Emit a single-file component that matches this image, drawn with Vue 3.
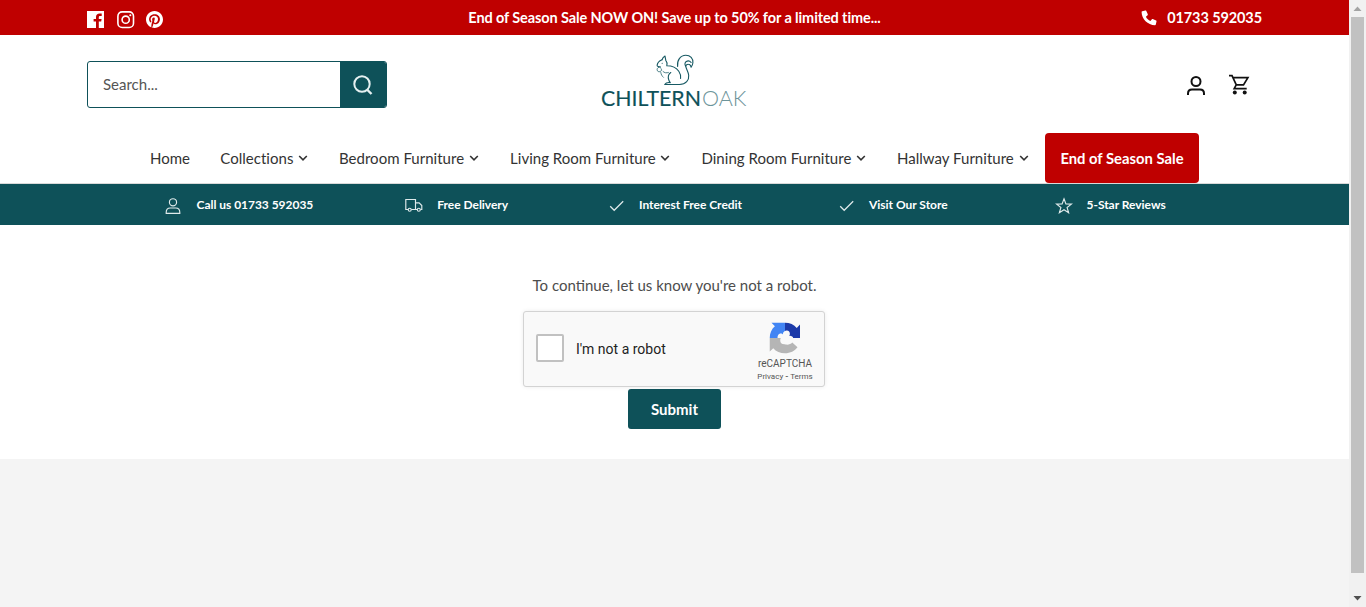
<script setup>
const links = [
  { label: 'Home', menu: false, width: 40.3 },
  { label: 'Collections', menu: true, width: 87.700 },
  { label: 'Bedroom Furniture', menu: true, width: 140.100 },
  { label: 'Living Room Furniture', menu: true, width: 160.400 },
  { label: 'Dining Room Furniture', menu: true, width: 164.500 },
  { label: 'Hallway Furniture', menu: true, width: 132 },
]
const benefits = [
  { icon: 'person', label: 'Call us 01733 592035' },
  { icon: 'truck', label: 'Free Delivery' },
  { icon: 'check', label: 'Interest Free Credit' },
  { icon: 'check', label: 'Visit Our Store' },
  { icon: 'star', label: '5-Star Reviews' },
]
</script>

<template>
  <div class="window">
    <div class="page">
      <div class="announce">
        <div class="social">
          <svg width="18" height="18" viewBox="0 0 18 18"><path fill="#fff" fill-rule="evenodd" d="M0 0h17v17h-5.200v-6.400h2.400l.4-2.700h-2.800V6.300c0-.8.4-1.300 1.400-1.300h1.500V2.500c-.5-.1-1.200-.1-2-.1-2.300 0-3.700 1.300-3.700 3.700v1.800H6.600v2.700H9V17H0z" /></svg>
          <svg width="18" height="18" viewBox="0 0 18 18" fill="none" stroke="#fff" stroke-width="1.600"><rect x=".9" y=".9" width="15.600" height="15.600" rx="4.300" /><circle cx="8.700" cy="8.700" r="3.600" /><circle cx="13.300" cy="4.200" r="1.050" fill="#fff" stroke="none" /></svg>
          <svg class="pin" width="17" height="17" viewBox="0 0 24 24"><path fill="#fff" d="M12 0C5.370 0 0 5.370 0 12c0 5.080 3.160 9.420 7.630 11.170-.1-.95-.2-2.400.04-3.440.22-.94 1.410-5.960 1.410-5.960s-.36-.72-.36-1.780c0-1.670.97-2.910 2.170-2.910 1.020 0 1.520.77 1.520 1.690 0 1.030-.66 2.570-1 3.990-.28 1.190.6 2.160 1.780 2.160 2.130 0 3.770-2.250 3.770-5.500 0-2.870-2.060-4.880-5.010-4.880-3.410 0-5.410 2.560-5.410 5.200 0 1.030.4 2.140.89 2.740.1.120.11.220.08.340l-.33 1.360c-.05.220-.17.270-.4.160-1.500-.7-2.430-2.890-2.430-4.650 0-3.780 2.750-7.260 7.920-7.260 4.160 0 7.390 2.970 7.390 6.930 0 4.140-2.610 7.460-6.230 7.460-1.210 0-2.360-.63-2.750-1.380l-.75 2.850c-.27 1.040-1 2.350-1.490 3.150C9.560 23.810 10.760 24 12 24c6.630 0 12-5.370 12-12S18.630 0 12 0z" /></svg>
        </div>
        <strong class="notice">End of Season Sale NOW ON! Save up to 50% for a limited time...</strong>
        <div class="phone">
          <svg width="16" height="16" viewBox="0 0 16 16"><path fill="#fff" d="M1.200 1.200 4.400.5c.4-.1.700.1.900.4l1.500 3.400c.1.300 0 .7-.2.900L4.900 6.700c1 2 2.500 3.400 4.500 4.400l1.500-1.900c.2-.2.600-.3.900-.2l3.300 1.500c.4.100.5.500.4.900l-.7 3.200c-.1.400-.4.600-.8.600C6.800 15.200.6 9 .6 2c0-.4.200-.7.600-.8z" /></svg>
          <strong>01733 592035</strong>
        </div>
      </div>

      <header class="masthead">
        <div class="search">
          <span class="field">Search...</span>
          <button class="go" aria-label="Search">
            <svg width="24" height="24" viewBox="0 0 24 24" fill="none" stroke="#e5f0f1" stroke-width="2"><circle cx="11" cy="11" r="7.700" /><path d="m16 16.500 4.500 4.500" stroke-width="2.400" /></svg>
          </button>
        </div>
        <svg class="logo" width="150" height="60" viewBox="0 0 150 60">
          <g fill="none" stroke="#175963" stroke-width="1.100" stroke-linecap="round" stroke-linejoin="round">
            <path d="M62 8.800c.5-1.700 1.500-2.900 3-3.800l.8 4.400c1.300 1.500 1.400 3.500 1 5.400 5 0 9.800 2.200 12 5.400 1.600 2.400 2.200 4.600 1.800 7.300" />
            <path d="M62 8.800c-2.600 1-4.600 3.500-4.900 5.600-.1 1 1.700 1.600 3.200 1.600" />
            <path d="M60.500 16c-2.100-.2-3.400 1.100-3.400 2.700 0 1.700 1.700 2.500 3.200 1.800 1.300-.6 1.600-1.900.8-2.900M60.800 21.500c.2 1.900 1.200 3.600 2.600 4.800M63 20.500c1.300 1.400 3.500 1.700 5.400 1" stroke-width=".75" />
            <path d="M70.800 21.500c-2.400 1.600-3 4.500-2 7.500.3 1 .8 1.900 1.500 2.600-2.200-.3-4.400 0-5.600 1.900H79.500c6.500 0 9.700-4.300 9.200-9.200-.4-4-2.500-6.100-3-9.200" />
            <path d="M77.600 15.500c-.8-6 2.700-11.300 8.200-11.300 4.600 0 7.400 3.500 7.100 7.500-.2 1.900-1 3.500-1.800 4.600-.2-1.600-.8-3-2.700-3.100-1.300-.1-2.200.5-2.700 1.900-1.300-1.700-.8-3.700.6-4.600 1.500-.9 3.700-.4 4.800 1" />
          </g>
          <circle cx="62.200" cy="12.200" r=".55" fill="#175963" />
          <text class="logo-main" x="1" y="55" textLength="100" lengthAdjust="spacingAndGlyphs">CHILTERN</text>
          <text class="logo-oak" x="102" y="55" textLength="44.500" lengthAdjust="spacingAndGlyphs">OAK</text>
        </svg>
        <div class="tools">
          <svg width="20" height="22" viewBox="0 0 20 22" fill="none" stroke="#111" stroke-width="2"><circle cx="10" cy="6.500" r="4.500" /><path d="M2 20v-1.500c0-2.500 1.500-4 4-4h8c2.500 0 4 1.500 4 4v1.500" /></svg>
          <svg width="22" height="22" viewBox="0 0 22 22" fill="none" stroke="#111" stroke-width="1.700"><path d="M1 1.600h3l4.300 9.300h7.200l4.400-7.300H4.900M8.200 10.900l-2 3.700h12.500" /><g fill="#111" stroke="none"><circle cx="6.800" cy="18.500" r="2" /><circle cx="16.700" cy="18.500" r="2" /></g></svg>
        </div>
      </header>

      <nav class="nav">
        <a v-for="l in links" :key="l.label" class="link" :style="{ width: l.width + 'px' }">
          <span>{{ l.label }}</span>
          <svg v-if="l.menu" width="10" height="8" viewBox="0 0 10 8" fill="none" stroke="#333" stroke-width="1.600"><path d="m1.200 2 3.800 3.800L8.800 2" /></svg>
        </a>
        <a class="sale">End of Season Sale</a>
      </nav>

      <div class="benefits">
        <ul>
          <li v-for="b in benefits" :key="b.label">
            <svg width="18" height="18" viewBox="0 0 18 18" fill="none" stroke="#dfeaeb" stroke-width="1.150">
              <template v-if="b.icon === 'person'"><circle cx="8" cy="5.300" r="3.600" /><path d="M1.200 16.400v-1c0-3 2-4.400 4-4.400h5.600c2 0 4 1.400 4 4.400v1z" /></template>
              <template v-else-if="b.icon === 'truck'"><path d="M3.200 12.500H.8V2.500h9.700v10H6.200M10.500 5.800h3.600l2.700 2.800v3.900h-1.300M10.500 12.500h1.700" /><circle cx="4.700" cy="12.700" r="1.500" /><circle cx="13.800" cy="12.700" r="1.500" /></template>
              <path v-else-if="b.icon === 'check'" d="m3.200 9.300 4 4 9-9" stroke-width="1.250" />
              <path v-else d="m9 1.800 1.900 5.100 5.500.2-4.300 3.400 1.500 5.300L9 12.800l-4.600 3 1.500-5.300-4.300-3.400 5.500-.2z" />
            </svg>
            <span>{{ b.label }}</span>
          </li>
        </ul>
      </div>

      <main class="challenge">
        <p>To continue, let us know you're not a robot.</p>
        <div class="captcha">
          <span class="box"></span>
          <span class="robot">I'm not a robot</span>
          <div class="brand">
            <svg width="32" height="32" viewBox="0 0 64 64">
              <path fill="#1c3aa9" d="M62 32V5l-6.500 6.800C50 5 41.500 1.500 32 1.500v17c3.500-1 7.500.5 8.500 4.500h.5l-.5 3-5 6z" />
              <path fill="#4285f4" d="M32 1.500H5l6.800 7C5 14 1.500 22.500 1.500 32h17c-1-4 .5-8 4.500-8.500 1.200 0 2 .3 2.500 1l2.500 2c-.5-4.500 1-7.500 4-8z" />
              <path fill="#b5b5b5" d="M1.500 32v27l7-6.500C14 59.500 22.500 62.500 32 62.500c10.500 0 19.500-4.500 25-12L46.500 41c-3 3.500-8 5-13.500 4-5-.8-8-3-9.500-6l4.500-7z" />
              <path fill="#f9f9f9" d="M17 32c-.5-5 2.500-9 7-9 1.700 0 3.300.9 4.400 2.500.3-4.800 3-8.500 7.200-8.500 4 0 6.500 3 6 7-.2 1.500-.7 2.700-1.300 3.500 4.500-.5 7.500 1.500 8 4.500 0 5-3 8.500-7.300 8.500-2.200 0-3.700-.8-5-2-1.500 4.500-4.700 6.500-8.300 5.500-4-1-5.700-4.500-5.200-9 .1-1 .6-2 1.200-3z" />
            </svg>
            <span class="name">reCAPTCHA</span>
            <span class="terms">Privacy <b>-</b> Terms</span>
          </div>
        </div>
        <button class="submit">Submit</button>
      </main>
    </div>
    <div class="scrollbar">
      <svg width="17" height="17" viewBox="0 0 17 17"><path fill="#a3a3a3" d="m4.500 11 4-4.500 4 4.500z" /></svg>
      <div class="thumb"></div>
      <svg width="17" height="17" viewBox="0 0 17 17"><path fill="#505050" d="m4.500 6 4 4.500 4-4.500z" /></svg>
    </div>
  </div>
</template>

<style>
body { overflow: hidden; background: #f4f4f4; }
</style>

<style scoped>
.window { display: flex; height: 607px; font-family: Lato, "Liberation Sans", sans-serif; font-size: 15px; color: #333; }
.window svg { display: block; flex: none; }
.page { width: 1349px; background: #f4f4f4; }
button { border: 0; padding: 0; font: inherit; }

.announce { display: grid; grid-template-columns: 1fr auto 1fr; height: 35px; box-sizing: border-box; padding: 0 87px; background: #bf0000; color: #fff; font-size: 14.500px; line-height: 35px; }
.social { display: flex; gap: 12px; padding-top: 11px; }
.social .pin { margin-left: -1px; }
.notice { white-space: nowrap; letter-spacing: -.11px; }
.phone { display: flex; justify-content: flex-end; gap: 10px; letter-spacing: -.1px; }
.phone svg { margin-top: 10px; }

.masthead { display: grid; grid-template-columns: 1fr 150px 1fr; height: 98px; box-sizing: border-box; padding: 0 87px; background: #fff; }
.search { display: flex; width: 300px; height: 47px; margin-top: 26px; box-sizing: border-box; border: 1px solid #0e5159; border-radius: 3px; overflow: hidden; }
.field { flex: 1; padding-left: 15px; line-height: 45px; color: #555; }
.go { display: flex; align-items: center; justify-content: center; width: 46px; background: #0e5159; }
.logo { margin-top: 16px; }
.logo-main { font: 400 21px Lato, sans-serif; fill: #0e5159; }
.logo-main { stroke: #0e5159; stroke-width: .15px; }
.logo-oak { font: 300 21px Lato, sans-serif; fill: #6d949a; }
.tools { display: flex; justify-content: flex-end; gap: 22px; padding: 39px 12px 0 0; }
.tools svg:first-child { margin-top: 1px; }

.nav { display: flex; height: 50px; padding-left: 135px; background: #fff; border-bottom: 1px solid #d9d9d9; line-height: 51px; white-space: nowrap; }
.link { display: flex; flex: none; align-items: center; justify-content: space-between; padding: 0 15px; letter-spacing: .02px; }
.link + .link { padding-right: 16px; }
.sale { width: 154px; background: #bf0000; border-radius: 4px; color: #fff; font-weight: 700; text-align: center; font-size: 14.800px; }

.benefits { height: 41px; background: #0e5159; }
ul { display: grid; grid-template-columns: repeat(5, 1fr); width: 1089px; height: 41px; margin: 0 auto; padding: 0; list-style: none; }
li { display: flex; align-items: center; justify-content: center; gap: 14px; color: #fff; font-size: 12px; font-weight: 700; line-height: 41px; white-space: nowrap; letter-spacing: -.03px; }
li svg { margin-top: 2px; }

.challenge { display: flex; flex-direction: column; align-items: center; height: 234px; background: #fff; }
.challenge p { margin: 49px 0 0; height: 37px; line-height: 22px; color: #4d4d4d; }
.captcha { display: flex; width: 302px; height: 76px; margin-right: 1px; box-sizing: border-box; border: 1px solid #d3d3d3; border-radius: 3px; background: #f9f9f9; box-shadow: 0 0 4px rgba(0, 0, 0, .08); font-family: Roboto, sans-serif; color: #222; }
.box { width: 24px; height: 24px; margin: 22px 12px 0; border: 2px solid #c1c1c1; border-radius: 2px; background: #fff; }
.robot { font-size: 14px; line-height: 74px; }
.brand { display: flex; flex-direction: column; align-items: center; width: 70px; margin: 10px 4px 0 auto; color: #555; }
.name { margin-top: 4px; font-size: 10px; line-height: 12px; }
.terms { margin-top: 2px; font-size: 8px; line-height: 10px; white-space: pre; }
.submit { width: 93px; height: 40px; margin-top: 2px; border-radius: 3px; background: #0e5159; color: #fff; font-weight: 700; }

.scrollbar { display: flex; flex-direction: column; width: 17px; background: #f1f1f1; }
.thumb { height: 556px; margin: 0 2px; background: #c1c1c1; }
.scrollbar svg:last-child { margin-top: 17px; }
</style>
